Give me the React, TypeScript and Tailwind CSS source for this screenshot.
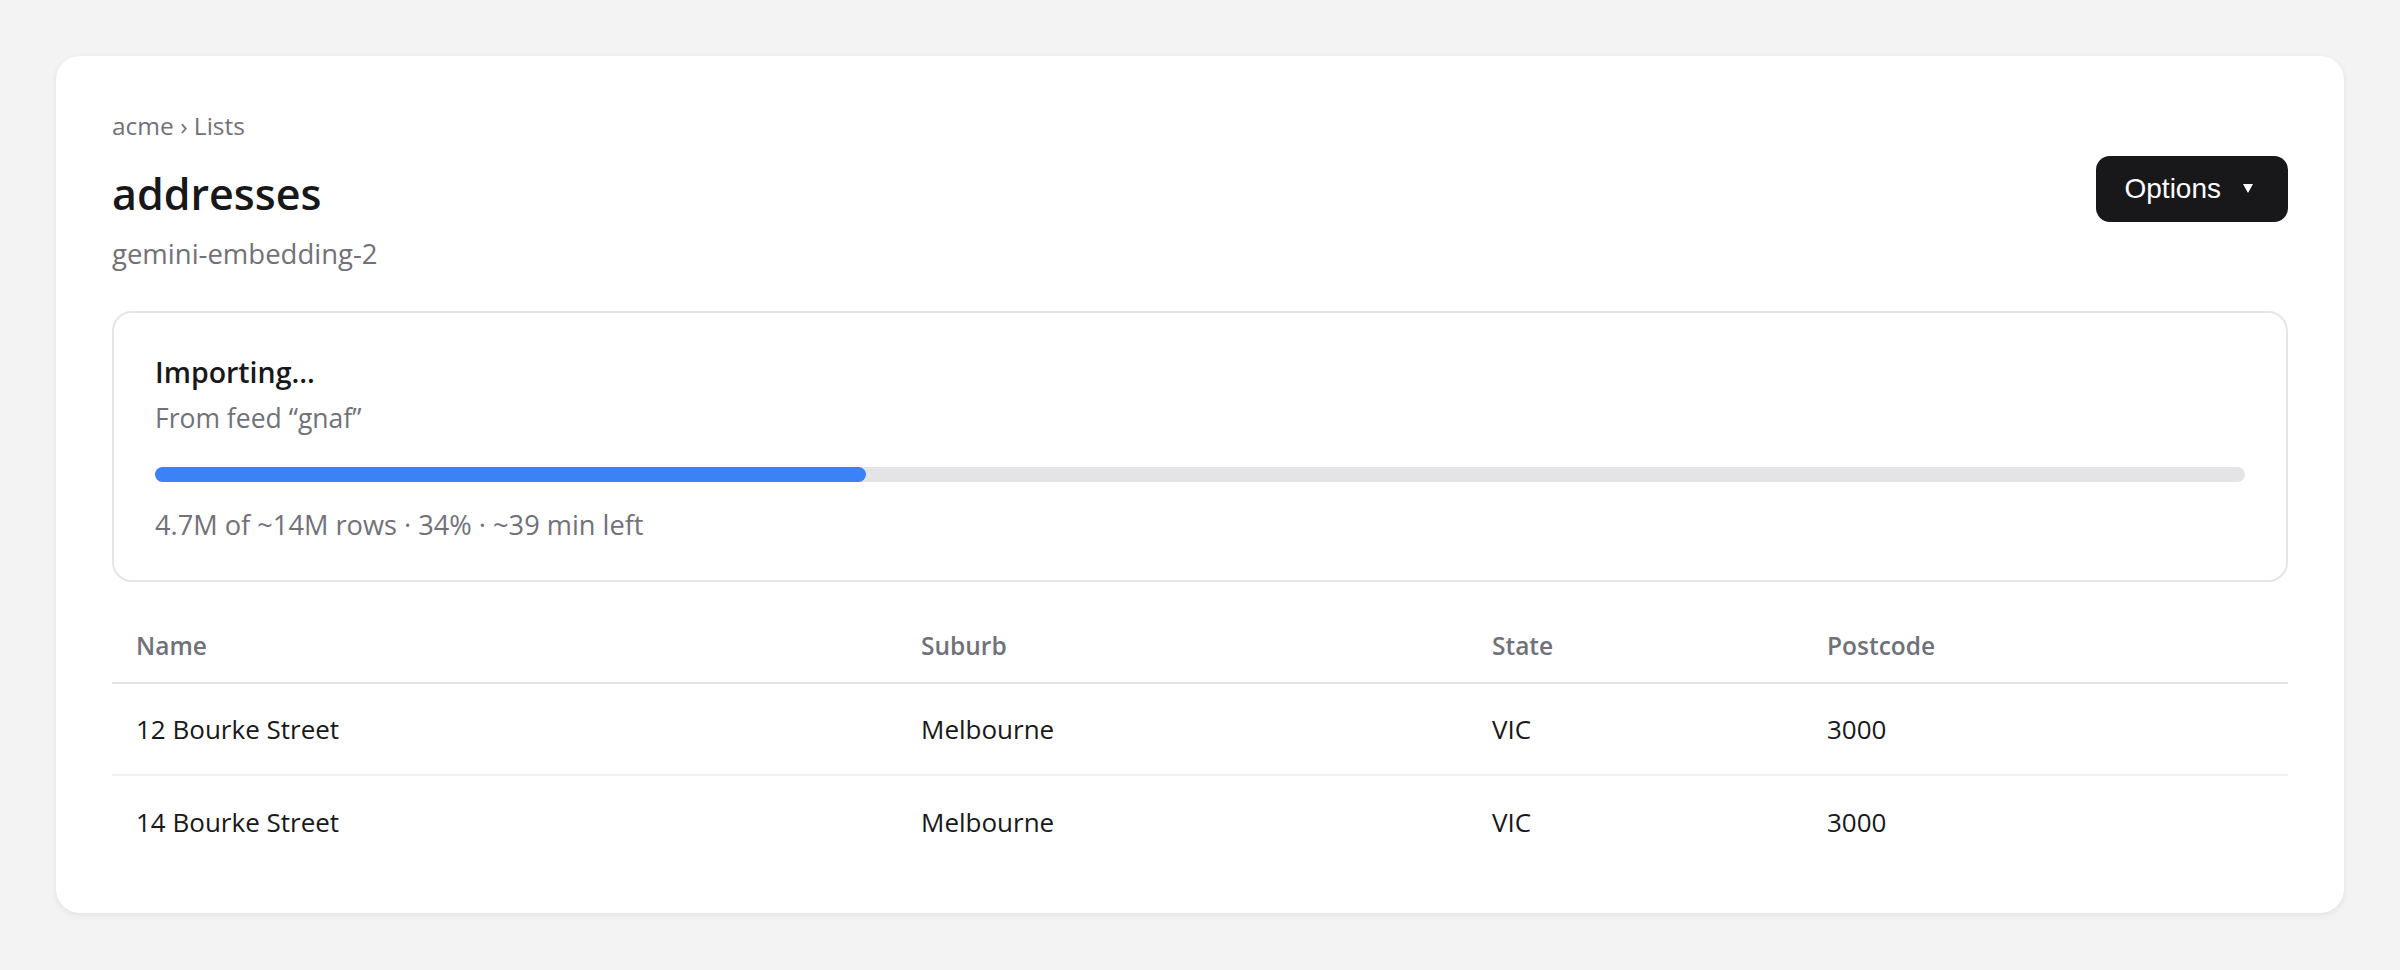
import React from "react";

const rows = [
  { name: "12 Bourke Street", suburb: "Melbourne", state: "VIC", postcode: "3000" },
  { name: "14 Bourke Street", suburb: "Melbourne", state: "VIC", postcode: "3000" },
];

export default function App() {
  return (
    <div className="min-h-[970px] w-full bg-[#f3f3f3] p-[56px] font-['Open_Sans',sans-serif]">
      <div className="rounded-[24px] bg-white px-[56px] pt-[57px] pb-[45px] shadow-[0_2px_6px_rgba(0,0,0,0.08)]">
        {/* Header */}
        <div className="flex items-start justify-between">
          <div className="flex flex-col">
            <div className="h-[26px] text-[24.5px] leading-[26px] text-[#71717a]">acme › Lists</div>
            <h1 className="mt-[29px] text-[43px] leading-[52px] font-semibold text-[#18181b]">addresses</h1>
            <div className="mt-[16px] text-[27.5px] leading-[36px] text-[#71717a]">gemini-embedding-2</div>
          </div>
          <button className="mt-[43px] flex h-[66px] items-center gap-[22px] rounded-[14px] bg-[#18181b] pl-[29px] pr-[35px] font-['Liberation_Sans',Arial,sans-serif] text-[28px] text-white">
            <span>Options</span>
            <svg width="10" height="9" viewBox="0 0 10 9" className="mt-[-2px]">
              <polygon points="0,0 10,0 5,9" fill="white" />
            </svg>
          </button>
        </div>

        {/* Import box */}
        <div className="mt-[39px] rounded-[20px] border-2 border-[#e5e5e5] px-[41px] pt-[41px] pb-[37px]">
          <div className="text-[28.5px] leading-[36px] font-semibold text-[#18181b]">Importing...</div>
          <div className="mt-[10px] text-[26.5px] leading-[36px] text-[#71717a]">From feed “gnaf”</div>
          <div className="mt-[31px] h-[15px] w-full rounded-full bg-[#e4e4e7]">
            <div className="h-full rounded-full bg-[#3b82f6]" style={{ width: "34%" }} />
          </div>
          <div className="mt-[25px] text-[27.2px] leading-[36px] text-[#71717a]">
            4.7M of ~14M rows · 34% · ~39 min left
          </div>
        </div>

        {/* Table */}
        <div className="mt-[29px]">
          <div className="grid h-[73px] grid-cols-[785px_571px_335px_1fr] items-center border-b-2 border-[#e4e4e7] text-[24.5px] font-semibold text-[#71717a]">
            <div className="pl-[24px]">Name</div>
            <div className="pl-[24px]">Suburb</div>
            <div className="pl-[24px]">State</div>
            <div className="pl-[24px]">Postcode</div>
          </div>
          {rows.map((r, i) => (
            <div
              key={i}
              className={`grid h-[92px] grid-cols-[785px_571px_335px_1fr] items-center text-[26px] text-[#18181b] ${
                i < rows.length - 1 ? "border-b-2 border-[#f1f1f2]" : ""
              }`}
            >
              <div className="pl-[24px]">{r.name}</div>
              <div className="pl-[24px]">{r.suburb}</div>
              <div className="pl-[24px]">{r.state}</div>
              <div className="pl-[24px]">{r.postcode}</div>
            </div>
          ))}
        </div>
      </div>
    </div>
  );
}
